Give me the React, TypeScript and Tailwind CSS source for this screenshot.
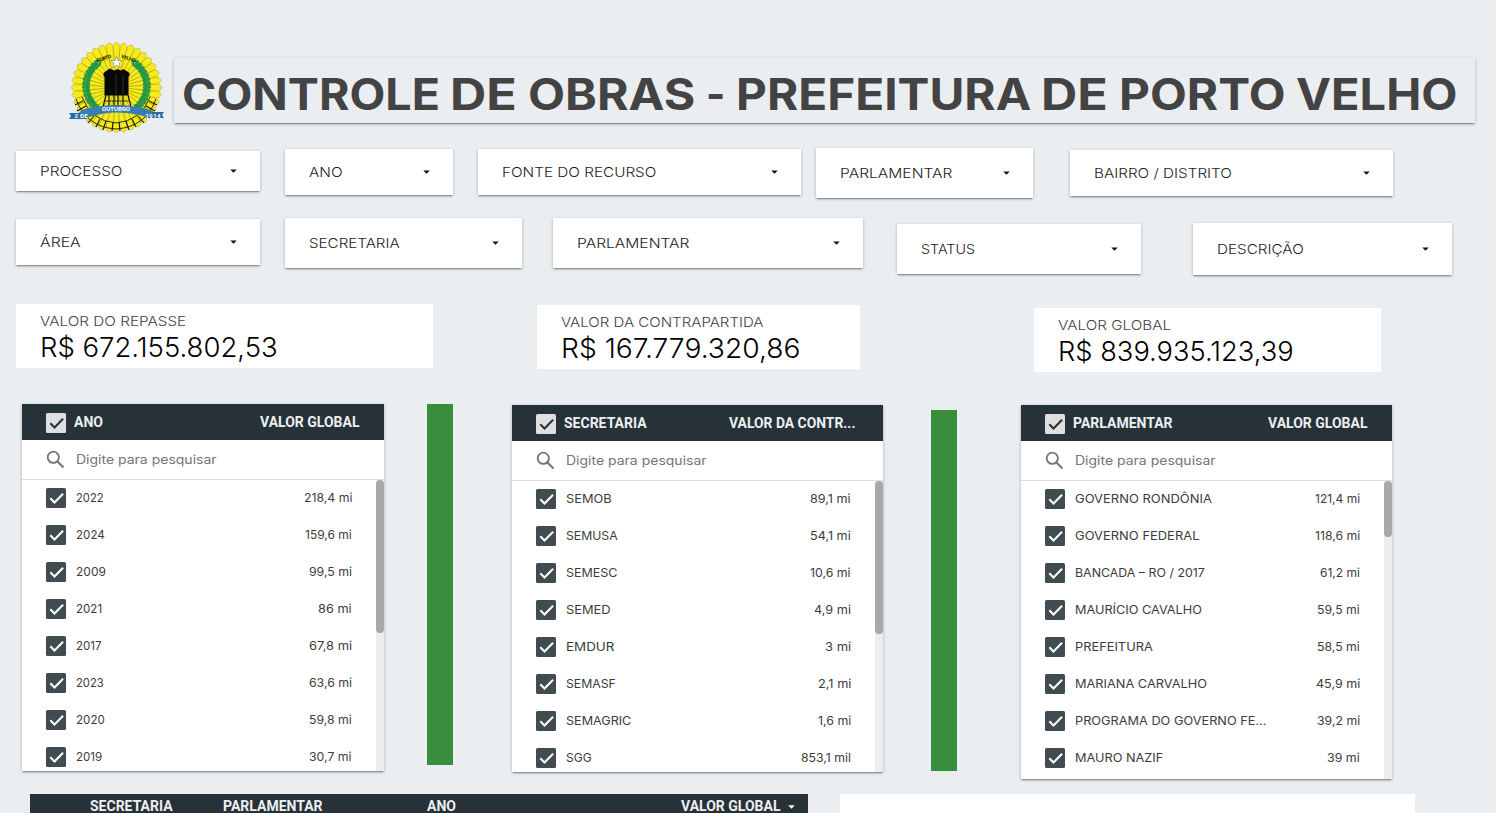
import { useLayoutEffect, useRef, useState } from "react";

/* Text stretched horizontally so that it fills a fixed width. */
function Fit({ text, w, className = "" }: { text: string; w: number; className?: string }) {
  const ref = useRef<HTMLSpanElement>(null);
  const [scale, setScale] = useState(1);
  useLayoutEffect(() => {
    if (ref.current) setScale(w / ref.current.offsetWidth);
  }, [text, w]);
  return (
    <span className="flex shrink-0 items-start justify-start whitespace-nowrap" style={{ width: w }}>
      <span ref={ref} className={`block shrink-0 origin-left ${className}`} style={{ transform: `scaleX(${scale})` }}>
        {text}
      </span>
    </span>
  );
}

const CARD = "shadow-[0_1px_3px_rgba(0,0,0,0.28),0_2px_1px_-1px_rgba(0,0,0,0.25)]";

function Filter({ label, w, box }: { label: string; w: number; box: string }) {
  return (
    <button className={`flex shrink-0 items-center justify-between bg-white pl-[24px] pr-[23px] ${CARD} ${box}`}>
      <Fit text={label} w={w} className="text-[13.5px] font-[350] leading-5 text-[#1c1c1c]" />
      <svg className="h-[4px] w-[7px]" viewBox="0 0 7 4">
        <path d="M.3 .5h6.4L3.5 3.8z" fill="#111" />
      </svg>
    </button>
  );
}

function Kpi({ label, lw, value, vw, box }: { label: string; lw: number; value: string; vw: number; box: string }) {
  return (
    <div className={`h-[64px] shrink-0 bg-white pl-[24px] pt-[7px] ${box}`}>
      <Fit text={label} w={lw} className="text-[13.5px] font-light leading-5 text-[#424242]" />
      <Fit text={value} w={vw} className="text-[27.5px] font-light leading-8 text-black" />
    </div>
  );
}

function Check({ light = false }: { light?: boolean }) {
  return (
    <svg className="block size-5 shrink-0" viewBox="0 0 20 20">
      <rect width="20" height="20" rx="1.5" fill={light ? "#dddfe0" : "#414c50"} />
      <path d="M4.3 10.3l4.2 4.2 8.6-8.8" fill="none" stroke={light ? "#263238" : "#fff"} strokeWidth="2" />
    </svg>
  );
}

type Row = [string, number, string, number];

function List({ title, tw, metric, mw, rows, box, thumb, headPad }: {
  title: string; tw: number; metric: string; mw: number; rows: Row[]; box: string; thumb: string; headPad: string;
}) {
  return (
    <section className={`flex shrink-0 flex-col overflow-hidden bg-white ${CARD} ${box}`}>
      <header className={`flex h-[36px] shrink-0 items-center bg-[#263238] pl-[24px] ${headPad}`}>
        <span className="mt-[2px]"><Check light /></span>
        <div className="ml-[8px] flex flex-1 justify-between">
          <Fit text={title} w={tw} className="font-[Roboto] text-[14px] font-bold leading-5 text-[#eceff1]" />
          <Fit text={metric} w={mw} className="font-[Roboto] text-[14px] font-bold leading-5 text-[#eceff1]" />
        </div>
      </header>
      <div className="flex h-[40px] shrink-0 items-center border-b border-[#dddddd] pl-[24px]">
        <svg className="h-[20px] w-[20px]" viewBox="0 0 20 20" fill="none" stroke="#757575" strokeWidth="1.8">
          <circle cx="7.3" cy="7.3" r="5.6" />
          <path d="M11.4 11.4l6.1 6.1" strokeWidth="2.1" />
        </svg>
        <Fit text="Digite para pesquisar" w={140} className="ml-[10px] mt-px text-[12.5px] leading-5 text-[#757575]" />
      </div>
      <div className="flex min-h-0 flex-1">
        <ul className="flex-1 overflow-hidden pl-[24px] pr-[24px]">
          {rows.map(([name, nw, val, vw]) => (
            <li key={name} className="flex h-[37px] items-center pb-px">
              <Check />
              <div className="ml-[10px] flex flex-1 justify-between">
                <Fit text={name} w={nw} className="text-[12px] leading-5 text-[#3c3c3c]" />
                <Fit text={val} w={vw} className="text-[12px] leading-5 text-[#3c3c3c]" />
              </div>
            </li>
          ))}
        </ul>
        <div className="w-[8px] bg-[#ededed]">
          <div className={`rounded-full bg-[#a8a8a8] ${thumb}`} />
        </div>
      </div>
    </section>
  );
}

const YEARS: Row[] = [
  ["2022", 28, "218,4 mi", 48], ["2024", 29, "159,6 mi", 47], ["2009", 30, "99,5 mi", 43], ["2021", 26, "86 mi", 34],
  ["2017", 26, "67,8 mi", 43], ["2023", 28, "63,6 mi", 43], ["2020", 29, "59,8 mi", 43], ["2019", 26, "30,7 mi", 43],
];
const OFFICES: Row[] = [
  ["SEMOB", 46, "89,1 mi", 41], ["SEMUSA", 52, "54,1 mi", 41], ["SEMESC", 51, "10,6 mi", 41], ["SEMED", 45, "4,9 mi", 37],
  ["EMDUR", 48, "3 mi", 26], ["SEMASF", 50, "2,1 mi", 33], ["SEMAGRIC", 65, "1,6 mi", 33], ["SGG", 26, "853,1 mil", 50],
];
const MEMBERS: Row[] = [
  ["GOVERNO RONDÔNIA", 137, "121,4 mi", 45], ["GOVERNO FEDERAL", 125, "118,6 mi", 45], ["BANCADA – RO / 2017", 130, "61,2 mi", 40],
  ["MAURÍCIO CAVALHO", 127, "59,5 mi", 43], ["PREFEITURA", 78, "58,5 mi", 43], ["MARIANA CARVALHO", 132, "45,9 mi", 44],
  ["PROGRAMA DO GOVERNO FE...", 191, "39,2 mi", 43], ["MAURO NAZIF", 88, "39 mi", 33],
];

const TITLE: [string, number][] = [
  ["CONTROLE", 258], ["DE", 67], ["OBRAS", 167], ["-", 19], ["PREFEITURA", 295], ["DE", 67], ["PORTO", 166], ["VELHO", 162],
];

const petals = Array.from({ length: 36 }, (_, i) => (i * Math.PI) / 18);
const polar = (r: number, a: number) => `${(47.5 + Math.cos(a) * r).toFixed(2)} ${(46.5 + Math.sin(a) * r).toFixed(2)}`;
const rim =
  "M" + petals.map((a) => `${polar(41.5, a - 0.087)}L${polar(43.8, a - 0.055)}L${polar(45.3, a)}L${polar(43.8, a + 0.055)}`).join("L") + "Z";

function Leaves({ flip = false }: { flip?: boolean }) {
  const steps = Array.from({ length: 14 }, (_, i) => 2.35 + i * 0.13);
  return (
    <g transform={flip ? "translate(95 0) scale(-1 1)" : undefined}>
      <path d="M29 67Q17 58 18 43Q19 30 29 22" fill="none" stroke="#168a43" strokeWidth="2.6" />
      {steps.map((a) => {
        const x = 48 + Math.cos(a) * 31;
        const y = 45 + Math.sin(a) * 29;
        const deg = (a * 180) / Math.PI + 90;
        return (
          <g key={a} transform={`translate(${x} ${y}) rotate(${deg})`} fill="#25994a">
            <ellipse cx="0" cy="-2.2" rx="3.6" ry="1.2" transform="rotate(28)" />
            <ellipse cx="0" cy="2.2" rx="3.6" ry="1.2" transform="rotate(-28)" />
          </g>
        );
      })}
    </g>
  );
}

function Crest() {
  return (
    <svg className="h-[92px] w-[96px] shrink-0" viewBox="-1 1 96 92">
      <path d={rim} fill="#f6ea1a" stroke="#a8a03a" strokeWidth=".5" />
      {petals.map((a) => (
        <path key={a} d={`M${polar(7, a - 0.087)}L${polar(41.5, a - 0.087)}`} stroke="#8f891c" strokeWidth=".6" />
      ))}
      <Leaves />
      <Leaves flip />
      <g fill="none" stroke="#16180d">
        <path d="M7 58Q17 86 47 88Q77 86 87 58M13 56Q22 80 47 82Q72 80 81 56" strokeWidth=".9" />
        <path d="M6 64l8-4M8 70l9-5M13 77l7-6M19 82l6-7M27 86l4-8M34 89l3-9M43 90l1-9M51 90l-1-9M60 89l-3-9M67 86l-4-8M75 82l-6-7M81 77l-7-6M86 70l-9-5M88 64l-8-4" strokeWidth="1.1" />
      </g>
      <path d="M47.500 15.500l1.500 4h4.600l-3.600 2.800 1.300 4.500-3.800-2.700-3.800 2.700 1.300-4.500-3.600-2.800h4.600z" fill="#fff" stroke="#777" strokeWidth=".6" />
      <g fill="#080808">
        <path d="M34.500 32l6-4.500 5 2 3-1.500 3.500 1.500 2.500-1.500 6 4v3l-1 1v18.500H35.500V36l-1-1z" />
        <path d="M37 54l-3 12M40 54v12M45 54v12M49 54v12M54 54v12M59 54l3 12" stroke="#080808" strokeWidth="1.1" />
        <path d="M36 60h24" stroke="#080808" strokeWidth=".7" />
      </g>
      <path d="M47 33v20M54 33v20" stroke="#555" strokeWidth=".5" />
      <path d="M0 72h9l8-1 1 7H0l2-3zM95 71h-9l-8-1-1 7h18l-2-3z" fill="#2b6aa1" />
      <path d="M14 68.500Q47 59.500 80 68.500l4 2-5 6-7-2Q47 68 22 75.500l-7 2-5-6z" fill="#387db4" />
      <g fill="#fff" fontFamily="Roboto" fontWeight="700" textAnchor="middle">
        <text x="47" y="70.300" fontSize="6" textLength="28">OUTUBRO</text>
        <text x="12" y="77.300" fontSize="6" textLength="13">2 DE</text>
        <text x="84" y="76.600" fontSize="6" textLength="15">1914</text>
      </g>
      <g fill="#17180d" fontFamily="Roboto" fontWeight="700" textAnchor="middle" fontSize="5">
        <text transform="translate(35.500 19) rotate(-18)" textLength="15">PORTO</text>
        <text transform="translate(59 19) rotate(18)" textLength="15">VELHO</text>
      </g>
    </svg>
  );
}

const HEAD = "font-[Roboto] text-[14px] font-bold leading-5 text-[#eceff1]";

export default function App() {
  return (
    <main className="h-[813px] w-[1496px] overflow-hidden bg-[#eaeef1] font-[Inter,sans-serif]">
      <div className="flex h-[148px] items-start pl-[68px] pt-[42px]">
        <Crest />
        <h1 className={`ml-[10px] mt-[16px] flex h-[65px] w-[1301px] items-center gap-[10.8px] pl-[7.5px] pt-[6px] ${CARD}`}>
          {TITLE.map(([word, w], i) => (
            <Fit key={i} text={word} w={w} className="text-[43.5px] font-bold leading-[56px] text-[#434343]" />
          ))}
        </h1>
      </div>

      <div className="flex h-[70px] items-start pl-[16px]">
        <Filter label="PROCESSO" w={82} box="mt-[3px] h-[40px] w-[244px]" />
        <Filter label="ANO" w={34} box="ml-[25px] mt-px h-[46px] w-[168px]" />
        <Filter label="FONTE DO RECURSO" w={154} box="ml-[25px] mt-px h-[46px] w-[323px]" />
        <Filter label="PARLAMENTAR" w={112} box="ml-[15px] h-[50px] w-[217px]" />
        <Filter label="BAIRRO / DISTRITO" w={138} box="ml-[37px] mt-[2px] h-[46px] w-[323px]" />
      </div>
      <div className="flex h-[86px] items-start pl-[16px]">
        <Filter label="ÁREA" w={41} box="mt-px h-[46px] w-[244px]" />
        <Filter label="SECRETARIA" w={91} box="ml-[25px] h-[50px] w-[237px]" />
        <Filter label="PARLAMENTAR" w={112} box="ml-[31px] h-[50px] w-[310px]" />
        <Filter label="STATUS" w={54} box="ml-[34px] mt-[6px] h-[50px] w-[244px]" />
        <Filter label="DESCRIÇÃO" w={87} box="ml-[52px] mt-[5px] h-[52px] w-[259px]" />
      </div>

      <div className="flex h-[100px] items-start pl-[16px]">
        <Kpi label="VALOR DO REPASSE" lw={146} value="R$ 672.155.802,53" vw={238} box="w-[417px]" />
        <Kpi label="VALOR DA CONTRAPARTIDA" lw={203} value="R$ 167.779.320,86" vw={239} box="ml-[104px] mt-px w-[323px]" />
        <Kpi label="VALOR GLOBAL" lw={113} value="R$ 839.935.123,39" vw={236} box="ml-[174px] mt-[4px] w-[347px]" />
      </div>

      <div className="flex h-[390px] items-start pl-[22px]">
        <List title="ANO" tw={29} metric="VALOR GLOBAL" mw={100} rows={YEARS} box="h-[367px] w-[362px]" thumb="h-[153px]" headPad="pr-[24px]" />
        <div className="ml-[43px] h-[361px] w-[26px] shrink-0 bg-[#388e3c]" />
        <List title="SECRETARIA" tw={83} metric="VALOR DA CONTR..." mw={126} rows={OFFICES} box="ml-[59px] mt-px h-[367px] w-[371px]" thumb="h-[153px]" headPad="pr-[28px]" />
        <div className="ml-[48px] mt-[6px] h-[361px] w-[26px] shrink-0 bg-[#388e3c]" />
        <List title="PARLAMENTAR" tw={100} metric="VALOR GLOBAL" mw={100} rows={MEMBERS} box="ml-[64px] mt-px h-[374px] w-[371px]" thumb="h-[56px]" headPad="pr-[24px]" />
      </div>

      <div className="flex h-[19px] items-start overflow-hidden pl-[30px]">
        <div className="flex h-[36px] w-[778px] shrink-0 bg-[#263238] pl-[60px] pt-[2px]">
          <div className="w-[133px]"><Fit text="SECRETARIA" w={83} className={HEAD} /></div>
          <div className="w-[204px]"><Fit text="PARLAMENTAR" w={100} className={HEAD} /></div>
          <div className="w-[254px]"><Fit text="ANO" w={29} className={HEAD} /></div>
          <Fit text="VALOR GLOBAL" w={100} className={HEAD} />
          <svg className="ml-[7px] mt-[9px] h-[4px] w-[7px]" viewBox="0 0 7 4">
            <path d="M.3 .3h6.4L3.5 3.8z" fill="#fff" />
          </svg>
        </div>
        <div className="ml-[32px] h-[36px] w-[575px] shrink-0 bg-white" />
      </div>
    </main>
  );
}
